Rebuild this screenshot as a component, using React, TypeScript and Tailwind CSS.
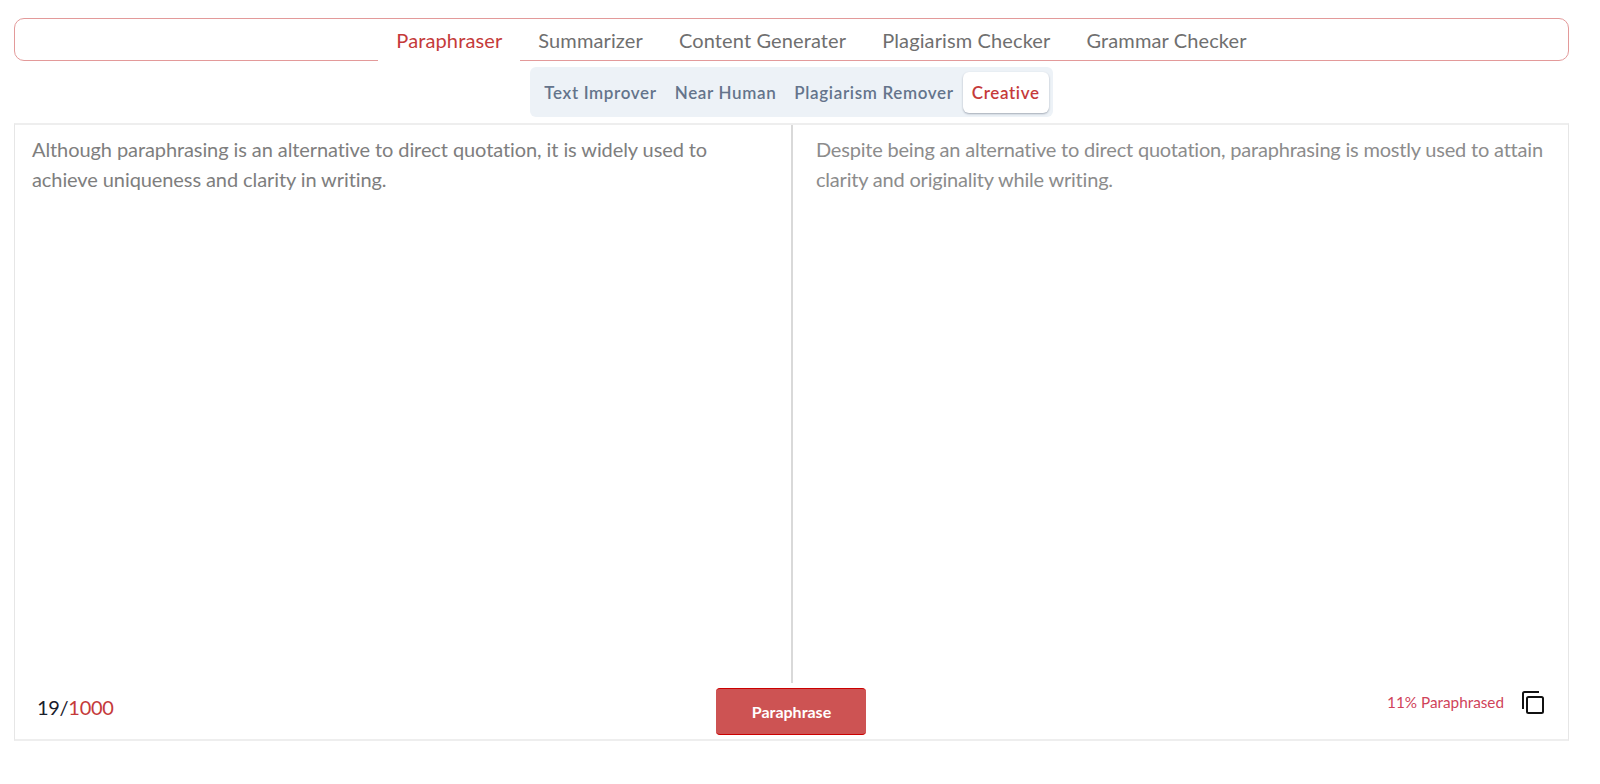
import { useState } from "react";

const mainTabs = ["Paraphraser", "Summarizer", "Content Generater", "Plagiarism Checker", "Grammar Checker"];
const modes = ["Text Improver", "Near Human", "Plagiarism Remover", "Creative"];

const inputText =
    "Although paraphrasing is an alternative to direct quotation, it is widely used to achieve uniqueness and clarity in writing.";
const outputText =
    "Despite being an alternative to direct quotation, paraphrasing is mostly used to attain clarity and originality while writing.";

function CopyIcon() {
    return (
        <svg viewBox="0 0 22 23" fill="none" stroke="currentColor" strokeWidth="2" className="h-[23px] w-[22px] text-[#111]">
            <path d="M1 18V2.5A1.5 1.5 0 0 1 2.5 1H17" />
            <rect x="5" y="6" width="16" height="16" rx="1.5" />
        </svg>
    );
}

export default function App() {
    const [activeTab, setActiveTab] = useState("Paraphraser");
    const [mode, setMode] = useState("Creative");

    return (
        <div className="min-h-screen bg-white pl-[14px] pr-[31px] pt-[18px] font-['Lato',sans-serif]">
            {/* Top tools */}
            <nav className="flex h-[43px] justify-center rounded-[10px] border border-[#e39a9a] pl-[60px]">
                {mainTabs.map((tab) => (
                    <button
                        key={tab}
                        onClick={() => setActiveTab(tab)}
                        className={`h-[42px] px-[18px] text-[20px] leading-[41px] tracking-[0.12px] ${
                            activeTab === tab ? "bg-white text-[#c53a3a]" : "text-[#6f6f6f]"
                        }`}
                    >
                        {tab}
                    </button>
                ))}
            </nav>

            {/* Modes */}
            <div className="mt-[6px] flex justify-center">
                <div className="flex h-[50px] items-center rounded-md bg-[#edf2f7] pl-[5px] pr-[4px]">
                    {modes.map((m) => (
                        <button
                            key={m}
                            onClick={() => setMode(m)}
                            className={`h-[41px] rounded-md px-[9px] pt-[2px] text-[17px] font-semibold tracking-[0.65px] ${
                                mode === m ? "bg-white text-[#c53a3a] shadow-[0_1px_2px_rgba(74,85,104,0.45)]" : "text-[#64748b]"
                            }`}
                        >
                            {m}
                        </button>
                    ))}
                </div>
            </div>

            {/* Editor */}
            <div className="mt-[6px] flex h-[618px] flex-col border border-y-2 border-[#e6e6e6] border-y-[#eeeeee]">
                <div className="flex h-[558px]">
                    <div className="w-[778px] shrink-0 border-r-2 border-[#d9d9d9] pl-[17px] pr-[30px] pt-[9px] text-[20px] leading-[30px] tracking-[-0.09px] text-[#7e7e7e]">
                        {inputText}
                    </div>
                    <div className="flex-1 pl-[23px] pr-[12px] pt-[9px] text-[20px] leading-[30px] tracking-[-0.2px] text-[#8c8c8c]">
                        {outputText}
                    </div>
                </div>
                <div className="grid flex-1 grid-cols-3 items-start pl-[22px] pr-[24px]">
                    <div className="pt-[9px] text-[20px] tracking-[-0.3px] text-[#1a202c]">
                        19/<span className="text-[#c53a3a]">1000</span>
                    </div>
                    <button className="ml-[2px] mt-[5px] h-[47px] w-[150px] justify-self-center rounded-[4px] border-y border-[#cc0000] bg-[#cd5353] pt-px text-[16px] font-bold text-white">
                        Paraphrase
                    </button>
                    <div className="flex items-center gap-[18px] justify-self-end pt-[8px]">
                        <span className="text-[15.3px] text-[#d0435a]">11% Paraphrased</span>
                        <CopyIcon />
                    </div>
                </div>
            </div>
        </div>
    );
}
